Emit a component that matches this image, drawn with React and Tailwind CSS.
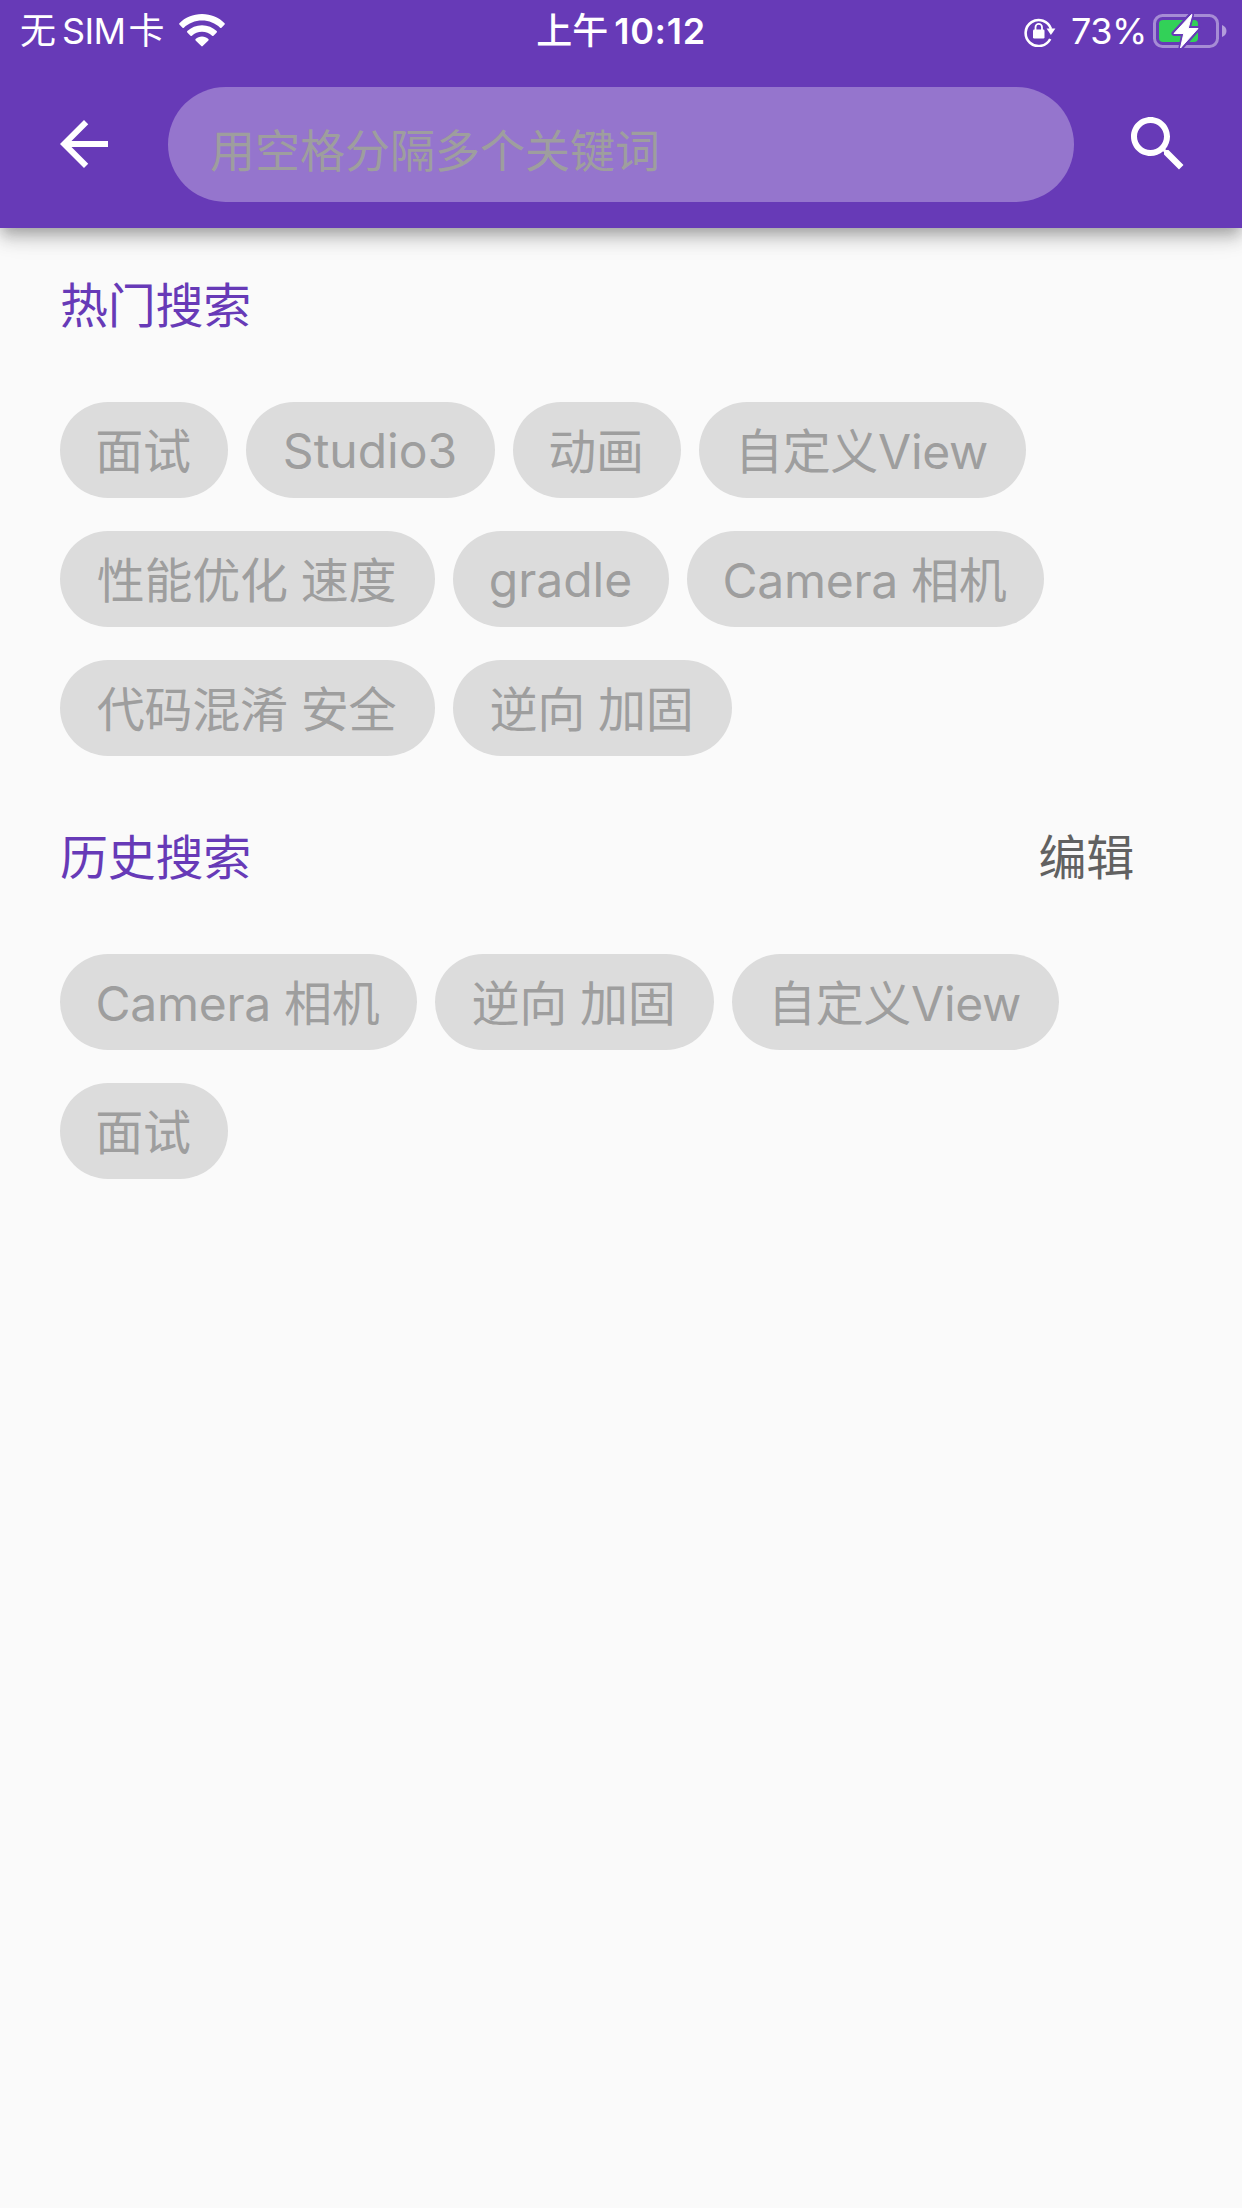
const HOT = [
  { label: '面试', size: 'w-[168px]' },
  { label: 'Studio3', size: 'w-[249px]', latin: true },
  { label: '动画', size: 'w-[168px]' },
  { label: '自定义View', size: 'w-[327px]' },
  { label: '性能优化 速度', size: 'w-[375px]' },
  { label: 'gradle', size: 'w-[216px]', latin: true },
  { label: 'Camera 相机', size: 'w-[357px]' },
  { label: '代码混淆 安全', size: 'w-[375px]' },
  { label: '逆向 加固', size: 'w-[279px]' },
];

const HISTORY = [
  { label: 'Camera 相机', size: 'w-[357px]' },
  { label: '逆向 加固', size: 'w-[279px]' },
  { label: '自定义View', size: 'w-[327px]' },
  { label: '面试', size: 'w-[168px]' },
];

function WifiIcon() {
  return (
    <svg className="ml-[15px] h-[34px] w-[46px]" viewBox="0 0 46 34" fill="white">
      <path d="M23 0C14 0 6 3.500 .4 9.200c-.4.400-.4 1 0 1.400l3.100 3.100c.4.400 1 .4 1.400 0C9.600 9.200 16 6.500 23 6.500s13.400 2.700 18.100 7.200c.4.400 1 .4 1.400 0l3.100-3.100c.4-.4.4-1 0-1.400C40 3.500 32 0 23 0Z" />
      <path d="M23 11.300c-5.700 0-10.900 2.200-14.700 5.800-.4.400-.4 1 0 1.400l3.200 3.200c.4.400 1 .4 1.400 0 2.700-2.400 6.200-3.900 10.100-3.900s7.400 1.500 10.100 3.900c.4.400 1 .4 1.400 0l3.200-3.200c.4-.4.4-1 0-1.400-3.800-3.600-9-5.800-14.700-5.800Z" />
      <path d="M23 22.600c-2.500 0-4.700.9-6.400 2.400-.4.400-.4 1 0 1.400l5.700 5.700c.4.400 1 .4 1.400 0l5.700-5.700c.4-.4.4-1 0-1.400-1.700-1.500-3.900-2.400-6.400-2.400Z" />
    </svg>
  );
}

function RotationLockIcon() {
  return (
    <svg className="mt-[2px] h-[30px] w-[32px]" viewBox="0 0 32 30" fill="none">
      <path d="M26.200 22A13 13 0 1 1 27 12" stroke="white" strokeWidth="2.600" />
      <path d="M22.600 11.600h8.800l-4.500 6.400Z" fill="white" />
      <rect x="9" y="12.500" width="11.500" height="9" rx="1.200" fill="white" />
      <path d="M11.500 13v-2.800a3.250 3.250 0 0 1 6.500 0V13" stroke="white" strokeWidth="1.800" />
    </svg>
  );
}

function BatteryIcon() {
  return (
    <svg className="ml-[6px] h-[36px] w-[76px]" viewBox="0 0 76 36" fill="none">
      <rect x="1.500" y="2.500" width="63" height="31" rx="8" stroke="#ffffff" strokeOpacity=".42" strokeWidth="3" />
      <path d="M69 12c2.700.9 4.500 3.200 4.500 6S71.700 23.100 69 24Z" fill="#fff" fillOpacity=".5" />
      <rect x="6" y="7" width="39" height="22" rx="4" fill="#32d158" />
      <path d="M38 2 21 20.500h9.800L28 34.500l17-19h-9.800L38.500 2Z" fill="white" stroke="#673ab7" strokeWidth="5" strokeLinejoin="round" />
      <path d="M38.500 1.500 21 20.500h9.800L27.500 35 45 15.500h-9.800L39 1.500Z" fill="white" stroke="white" strokeWidth="1" strokeLinejoin="round" />
    </svg>
  );
}

function StatusBar() {
  return (
    <div className="grid h-[60px] grid-cols-3 items-center text-[36px] leading-[60px] text-white">
      <div className="flex h-[60px] items-center pl-[20px] whitespace-pre">
        <span className="w-[144px] pt-[1px] font-normal">
          无<span className="mr-[3px] ml-[6px] tracking-[-0.6px]">SIM</span>卡
        </span>
        <WifiIcon />
      </div>
      <div className="flex items-center justify-center pt-[1px]">
        <span className="font-medium">上午</span>
        <span className="ml-[6px] font-semibold tracking-[0.7px]">10:12</span>
      </div>
      <div className="flex h-[60px] items-center justify-end pr-[13px]">
        <RotationLockIcon />
        <span className="ml-[15px] w-[76px] pt-[1px] tracking-[-0.5px]">73%</span>
        <BatteryIcon />
      </div>
    </div>
  );
}

function SearchBar() {
  return (
    <div className="flex h-[168px] items-center px-[48px]">
      <button className="h-[72px] w-[72px]" aria-label="返回">
        <svg className="h-[72px] w-[72px]" viewBox="0 0 24 24" fill="white">
          <path d="M20 11H7.830l5.590-5.590L12 4l-8 8 8 8 1.410-1.410L7.830 13H20v-2z" />
        </svg>
      </button>
      <input
        className="ml-[48px] h-[115px] w-[906px] rounded-full bg-[#9575cd] px-[42px] pt-[14px] text-[45px] text-white outline-none placeholder:text-[#9e9e9e] placeholder:opacity-100"
        placeholder="用空格分隔多个关键词"
      />
      <button className="ml-[48px] h-[72px] w-[72px]" aria-label="搜索">
        <svg className="h-[72px] w-[72px]" viewBox="0 0 24 24" fill="white">
          <path d="M15.500 14h-.79l-.28-.27C15.410 12.590 16 11.110 16 9.500 16 5.910 13.090 3 9.500 3S3 5.910 3 9.500 5.910 16 9.500 16c1.610 0 3.090-.59 4.230-1.570l.27.28v.79l5 4.990L20.490 19l-4.990-5zm-6 0C7.010 14 5 11.990 5 9.500S7.010 5 9.500 5 14 7.010 14 9.500 11.990 14 9.500 14z" />
        </svg>
      </button>
    </div>
  );
}

function Chips({ items }) {
  return (
    <div className="flex flex-wrap gap-x-[18px] gap-y-[33px]">
      {items.map((item) => (
        <button
          key={item.label}
          className={`${item.size} ${item.latin ? 'pt-[1px] pr-[1px]' : 'pt-[4px] pr-[2px] tracking-[-0.3px]'} flex h-[96px] items-center justify-center rounded-full bg-[#dcdcdc] text-[48px] whitespace-pre text-[#9e9e9e]`}
        >
          {item.label}
        </button>
      ))}
    </div>
  );
}

export default function App() {
  return (
    <div className="min-h-[2208px] w-[1242px] bg-[#fafafa] font-['Inter','Noto_Sans_CJK_SC',sans-serif]" lang="zh-CN">
      <header className="h-[228px] bg-[#673ab7] shadow-[0_6px_12px_-3px_rgba(0,0,0,0.2),0_12px_15px_0_rgba(0,0,0,0.14),0_3px_30px_0_rgba(0,0,0,0.12)]">
        <StatusBar />
        <SearchBar />
      </header>
      <main className="pr-[108px] pl-[60px]">
        <h2 className="flex h-[174px] items-center pb-[19px] text-[48px] tracking-[-0.25px] text-[#673ab7]">热门搜索</h2>
        <Chips items={HOT} />
        <div className="flex h-[198px] items-center justify-between pt-[5px] text-[48px] tracking-[-0.25px]">
          <h2 className="text-[#673ab7]">历史搜索</h2>
          <button className="text-[#616161]">编辑</button>
        </div>
        <Chips items={HISTORY} />
      </main>
    </div>
  );
}
